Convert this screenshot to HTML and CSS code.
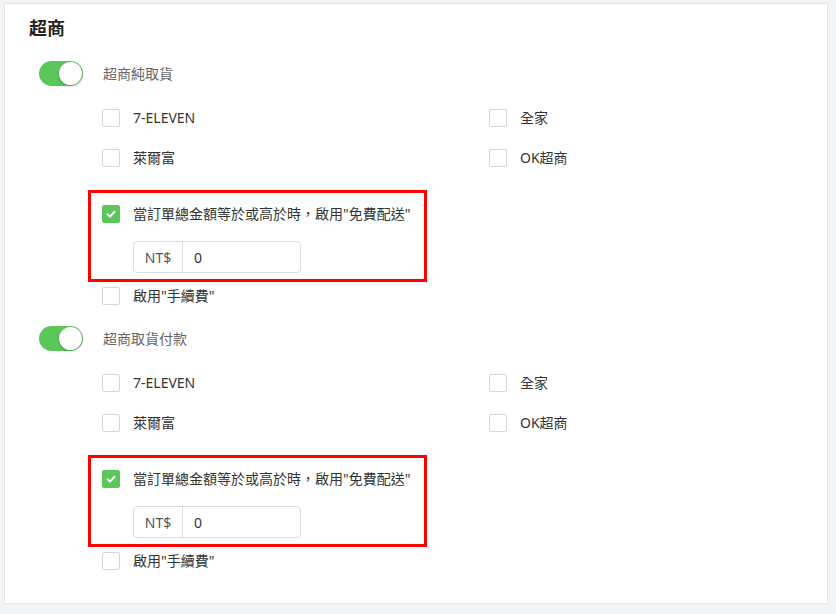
FILE: index.html
```html
<!DOCTYPE html>
<html>
    <head>
        <meta charset="UTF-8">
        <meta name="viewport" content="width=device-width, initial-scale=1.0">
        <title>超商</title>
        <link rel="stylesheet" href="styles.css">
    </head>
    <body>
        <div class="card">
            <h2 class="title">超商</h2>

            <div class="toggle-row">
                <span class="switch on"><span class="knob"></span></span>
                <span class="toggle-label">超商純取貨</span>
            </div>
            <div class="options">
                <label class="check-row"><span class="box"></span>7-ELEVEN</label>
                <label class="check-row"><span class="box"></span>全家</label>
                <label class="check-row"><span class="box"></span>萊爾富</label>
                <label class="check-row"><span class="box"></span>OK超商</label>
            </div>
            <div class="free-box">
                <label class="check-row"><span class="box checked"><svg viewBox="0 0 18 18"><path d="M5 9.2 L7.8 12 L13 6.5" fill="none" stroke="#fff" stroke-width="2.2" stroke-linecap="round" stroke-linejoin="round"/></svg></span>當訂單總金額等於或高於時，啟用"免費配送"</label>
                <div class="input-group">
                    <span class="addon">NT$</span>
                    <span class="value">0</span>
                </div>
            </div>
            <label class="check-row fee"><span class="box"></span>啟用"手續費"</label>

            <div class="toggle-row second">
                <span class="switch on"><span class="knob"></span></span>
                <span class="toggle-label">超商取貨付款</span>
            </div>
            <div class="options">
                <label class="check-row"><span class="box"></span>7-ELEVEN</label>
                <label class="check-row"><span class="box"></span>全家</label>
                <label class="check-row"><span class="box"></span>萊爾富</label>
                <label class="check-row"><span class="box"></span>OK超商</label>
            </div>
            <div class="free-box">
                <label class="check-row"><span class="box checked"><svg viewBox="0 0 18 18"><path d="M5 9.2 L7.8 12 L13 6.5" fill="none" stroke="#fff" stroke-width="2.2" stroke-linecap="round" stroke-linejoin="round"/></svg></span>當訂單總金額等於或高於時，啟用"免費配送"</label>
                <div class="input-group">
                    <span class="addon">NT$</span>
                    <span class="value">0</span>
                </div>
            </div>
            <label class="check-row fee"><span class="box"></span>啟用"手續費"</label>
        </div>
    </body>
</html>
```

FILE: styles.css
```css
body {
    margin: 0;
    padding: 3px 8px 0 4px;
    background: #f3f4f6;
    font-family: "Noto Sans", "Noto Sans CJK TC", sans-serif;
    font-size: 14px;
    color: #333333;
}

.card {
    background: #ffffff;
    border: 1px solid #e3e5e8;
    height: 601px;
    padding: 12px 0 0 24px;
    box-sizing: border-box;
}

.title {
    margin: 0;
    font-size: 18px;
    line-height: 24px;
    font-weight: bold;
    color: #222222;
}

.toggle-row {
    display: flex;
    align-items: center;
    gap: 20px;
    margin: 21px 0 0 10px;
    height: 25px;
}

.switch {
    position: relative;
    width: 44px;
    height: 25px;
    border-radius: 13px;
    background: #d9d9d9;
}

.switch.on {
    background: #5bc75b;
}

.knob {
    position: absolute;
    top: 1px;
    right: 1px;
    width: 23px;
    height: 23px;
    border-radius: 50%;
    background: #ffffff;
    box-shadow: 0 1px 3px rgba(0, 0, 0, 0.25);
}

.toggle-label {
    color: #666666;
    font-size: 14px;
    padding-bottom: 2px;
}

.options {
    display: grid;
    grid-template-columns: 387px 1fr;
    margin: 12px 0 0 73px;
}

.check-row {
    display: flex;
    align-items: center;
    gap: 13px;
    height: 40px;
    color: #333333;
    line-height: 18px;
    padding-bottom: 1px;
    box-sizing: border-box;
}

.box {
    width: 18px;
    height: 18px;
    border: 1px solid #d6d6d6;
    border-radius: 2px;
    box-sizing: border-box;
    background: #ffffff;
    flex: none;
    margin-top: 1px;
}

.box.checked {
    background: #5bc75b;
    border-color: #5bc75b;
}

.box svg {
    display: block;
    width: 16px;
    height: 16px;
}

.free-box {
    width: 339px;
    margin: 12px 0 0 59px;
    border: 3px solid #ff0000;
    box-sizing: border-box;
    padding: 12px 0 6px 11px;
}

.free-box .check-row {
    height: 18px;
}

.input-group {
    display: flex;
    width: 168px;
    height: 32px;
    margin: 18px 0 0 31px;
    border: 1px solid #dcdcdc;
    border-radius: 4px;
    box-sizing: border-box;
}

.addon {
    width: 48px;
    border-right: 1px solid #dcdcdc;
    display: flex;
    align-items: center;
    justify-content: center;
    color: #555555;
}

.value {
    display: flex;
    align-items: center;
    padding-left: 11px;
    color: #333333;
}

.fee {
    height: 18px;
    margin: 5px 0 0 73px;
}

.toggle-row.second {
    margin-top: 21px;
}
```
